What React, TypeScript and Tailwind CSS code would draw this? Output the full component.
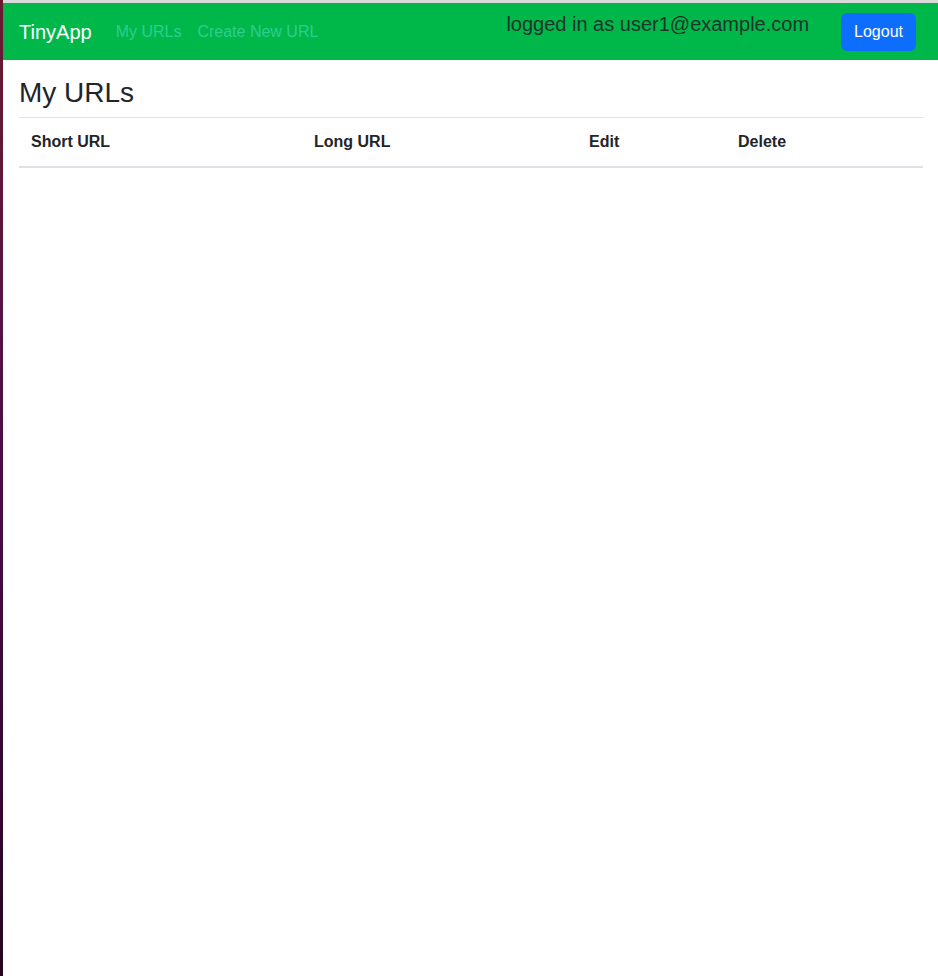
import React from "react";

export default function App() {
  const font = { fontFamily: '"Liberation Sans", Arial, sans-serif' };
  return (
    <div className="flex min-h-[976px] w-full bg-white text-[#212529]" style={font}>
      <div className="w-[3px] shrink-0 bg-gradient-to-b from-[#6b1a30] via-[#4a0c48] to-[#26061f]" />
      <div className="flex flex-1 flex-col">
        <div className="h-[3px] bg-[#dadada]" />
        <nav className="flex h-[57px] items-center bg-[#00b84a] pl-4 pr-[22px]">
          <span className="text-[20px] leading-[30px] text-white">TinyApp</span>
          <div className="ml-[24px] flex items-center gap-[16px] text-[16px] text-[#2ecd8f]">
            <span>My URLs</span>
            <span>Create New URL</span>
          </div>
          <span className="ml-auto self-start pt-[9px] text-[20px] leading-[24px] text-[#1e3529]">
            logged in as user1@example.com
          </span>
          <button className="ml-[32px] h-[38px] rounded-[6px] bg-[#0d6efd] px-[13px] text-[16px] leading-[24px] text-white">
            Logout
          </button>
        </nav>
        <main className="pl-4 pr-[15px]">
          <h3 className="pt-[16px] text-[28px] leading-[34px]">My URLs</h3>
          <div className="mt-[7px] grid h-[51px] grid-cols-[283px_275px_149px_1fr] items-center border-t border-b-2 border-t-[#dee2e6] border-b-[#dee2e6] text-[16px] font-bold">
            <div className="pl-3">Short URL</div>
            <div className="pl-3">Long URL</div>
            <div className="pl-3">Edit</div>
            <div className="pl-3">Delete</div>
          </div>
        </main>
      </div>
    </div>
  );
}
